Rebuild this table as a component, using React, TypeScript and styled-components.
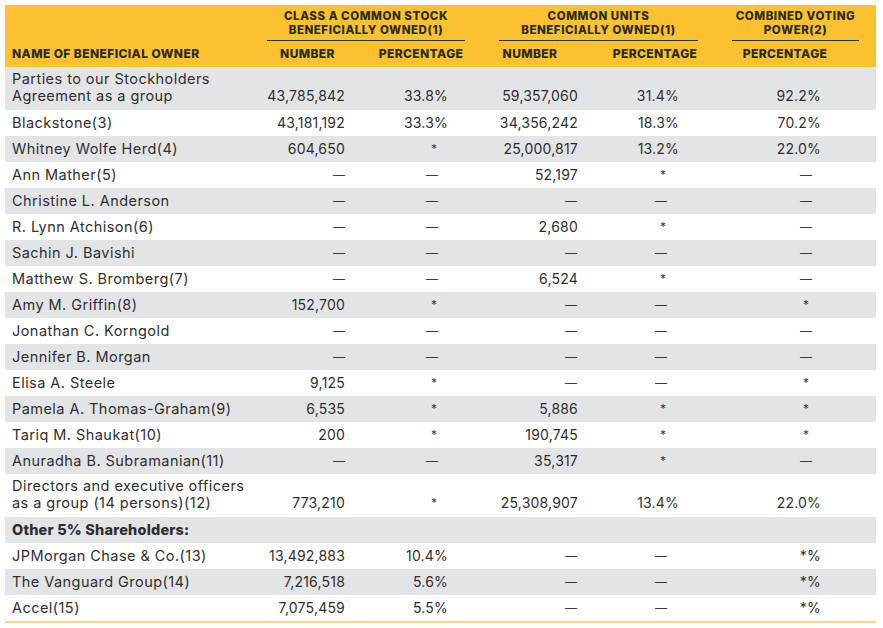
import React from 'react';
import styled, { createGlobalStyle } from 'styled-components';

const Global = createGlobalStyle`
  html, body { margin: 0; padding: 0; background: #ffffff; }
  body { font-family: Inter, "Liberation Sans", Arial, sans-serif; color: #2f2f2f; }
`;

const COLS = '255px 95px 115px 120px 130px 156px';

type ColCfg = { valuePr: number; dashPr: number; starPr: number };
const COL_CFG: ColCfg[] = [
  { valuePr: 10, dashPr: 10, starPr: 10 },
  { valuePr: 22, dashPr: 32, starPr: 33 },
  { valuePr: 12, dashPr: 13, starPr: 13 },
  { valuePr: 41, dashPr: 53, starPr: 54 },
  { valuePr: 55, dashPr: 64, starPr: 67 },
];

type RowData = { name: string[]; values?: string[]; section?: boolean };

const ROWS: RowData[] = [
  { name: ['Parties to our Stockholders', 'Agreement as a group'], values: ['43,785,842', '33.8%', '59,357,060', '31.4%', '92.2%'] },
  { name: ['Blackstone(3)'], values: ['43,181,192', '33.3%', '34,356,242', '18.3%', '70.2%'] },
  { name: ['Whitney Wolfe Herd(4)'], values: ['604,650', '*', '25,000,817', '13.2%', '22.0%'] },
  { name: ['Ann Mather(5)'], values: ['—', '—', '52,197', '*', '—'] },
  { name: ['Christine L. Anderson'], values: ['—', '—', '—', '—', '—'] },
  { name: ['R. Lynn Atchison(6)'], values: ['—', '—', '2,680', '*', '—'] },
  { name: ['Sachin J. Bavishi'], values: ['—', '—', '—', '—', '—'] },
  { name: ['Matthew S. Bromberg(7)'], values: ['—', '—', '6,524', '*', '—'] },
  { name: ['Amy M. Griffin(8)'], values: ['152,700', '*', '—', '—', '*'] },
  { name: ['Jonathan C. Korngold'], values: ['—', '—', '—', '—', '—'] },
  { name: ['Jennifer B. Morgan'], values: ['—', '—', '—', '—', '—'] },
  { name: ['Elisa A. Steele'], values: ['9,125', '*', '—', '—', '*'] },
  { name: ['Pamela A. Thomas-Graham(9)'], values: ['6,535', '*', '5,886', '*', '*'] },
  { name: ['Tariq M. Shaukat(10)'], values: ['200', '*', '190,745', '*', '*'] },
  { name: ['Anuradha B. Subramanian(11)'], values: ['—', '—', '35,317', '*', '—'] },
  { name: ['Directors and executive officers', 'as a group (14 persons)(12)'], values: ['773,210', '*', '25,308,907', '13.4%', '22.0%'] },
  { name: ['Other 5% Shareholders:'], section: true },
  { name: ['JPMorgan Chase & Co.(13)'], values: ['13,492,883', '10.4%', '—', '—', '*%'] },
  { name: ['The Vanguard Group(14)'], values: ['7,216,518', '5.6%', '—', '—', '*%'] },
  { name: ['Accel(15)'], values: ['7,075,459', '5.5%', '—', '—', '*%'] },
];

const Table = styled.div`
  margin: 5px 0 0 5px;
  width: 871px;
  border-bottom: 2px solid #f8d47c;
`;

const Header = styled.div`
  display: grid;
  grid-template-columns: ${COLS};
  grid-template-rows: 37px 25px;
  background: #fcc12f;
  color: #2b2a22;
  font-weight: 800;
  text-transform: uppercase;
`;

const GroupCell = styled.div<{ $col: string; $ml: number; $mr: number }>`
  grid-row: 1;
  grid-column: ${(p) => p.$col};
  display: flex;
  align-items: flex-end;
  padding: 0 ${(p) => p.$mr}px 0 ${(p) => p.$ml}px;
`;

const GroupLabel = styled.div`
  width: 100%;
  text-align: center;
  font-size: 11.5px;
  line-height: 13.5px;
  letter-spacing: 0.55px;
  padding-bottom: 3px;
  margin-bottom: 1px;
  border-bottom: 1.5px solid #302e28;
  white-space: nowrap;
`;

const SubHead = styled.div<{ $col: number; $pl?: number; $pr?: number; $left?: boolean }>`
  grid-row: 2;
  grid-column: ${(p) => p.$col};
  display: flex;
  align-items: center;
  justify-content: ${(p) => (p.$left ? 'flex-start' : 'center')};
  padding: 0 ${(p) => p.$pr ?? 0}px 2px ${(p) => p.$pl ?? 0}px;
  font-size: 12px;
  letter-spacing: 0.4px;
  white-space: nowrap;
`;

const Row = styled.div<{ $shade: boolean; $tall: boolean }>`
  display: grid;
  grid-template-columns: ${COLS};
  height: ${(p) => (p.$tall ? 43 : 26)}px;
  background: ${(p) => (p.$shade ? '#e3e4e6' : '#ffffff')};
  align-items: ${(p) => (p.$tall ? 'end' : 'center')};
  padding-bottom: ${(p) => (p.$tall ? 6 : 0)}px;
  box-sizing: border-box;
  font-size: 14.5px;
  line-height: 16.5px;
`;

const NameCell = styled.div<{ $bold?: boolean }>`
  padding-left: 7px;
  font-weight: ${(p) => (p.$bold ? 800 : 400)};
  letter-spacing: ${(p) => (p.$bold ? '0.2px' : '0.45px')};
  white-space: nowrap;
  grid-column: ${(p) => (p.$bold ? '1 / 7' : 'auto')};
`;

const ValueCell = styled.div<{ $pr: number; $symbol?: boolean }>`
  text-align: right;
  padding-right: ${(p) => p.$pr}px;
  white-space: nowrap;
  font-size: ${(p) => (p.$symbol ? '12px' : '14px')};
  letter-spacing: ${(p) => (p.$symbol ? '0' : '0.2px')};
  color: ${(p) => (p.$symbol ? '#3a3a3a' : '#2f2f2f')};
`;

function renderValue(v: string, i: number) {
  const cfg = COL_CFG[i];
  if (v === '—') return <ValueCell key={i} $pr={cfg.dashPr} $symbol>{v}</ValueCell>;
  if (v === '*') return <ValueCell key={i} $pr={cfg.starPr} $symbol>{v}</ValueCell>;
  return <ValueCell key={i} $pr={cfg.valuePr}>{v}</ValueCell>;
}

export default function App() {
  return (
    <>
      <Global />
      <Table>
        <Header>
          <GroupCell $col="2 / 4" $ml={7} $mr={5}>
            <GroupLabel>Class A Common Stock<br />Beneficially Owned(1)</GroupLabel>
          </GroupCell>
          <GroupCell $col="4 / 6" $ml={29} $mr={22}>
            <GroupLabel>Common Units<br />Beneficially Owned(1)</GroupLabel>
          </GroupCell>
          <GroupCell $col="6 / 7" $ml={12} $mr={17}>
            <GroupLabel>Combined Voting<br />Power(2)</GroupLabel>
          </GroupCell>
          <SubHead $col={1} $left $pl={7}>Name of Beneficial Owner</SubHead>
          <SubHead $col={2}>Number</SubHead>
          <SubHead $col={3} $pl={17}>Percentage</SubHead>
          <SubHead $col={4}>Number</SubHead>
          <SubHead $col={5}>Percentage</SubHead>
          <SubHead $col={6} $pr={26}>Percentage</SubHead>
        </Header>
        {ROWS.map((r, idx) => (
          <Row key={idx} $shade={idx % 2 === 0} $tall={r.name.length > 1}>
            <NameCell $bold={r.section}>
              {r.name.map((line, j) => (
                <React.Fragment key={j}>
                  {j > 0 && <br />}
                  {line}
                </React.Fragment>
              ))}
            </NameCell>
            {r.values?.map((v, i) => renderValue(v, i))}
          </Row>
        ))}
      </Table>
    </>
  );
}
